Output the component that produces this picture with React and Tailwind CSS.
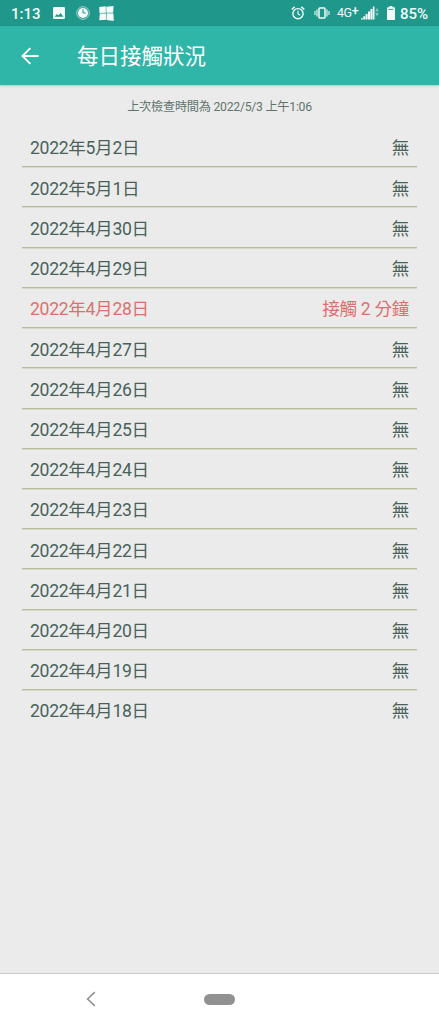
import React from 'react';

const records = [
  { date: '2022年5月2日', status: '無' },
  { date: '2022年5月1日', status: '無' },
  { date: '2022年4月30日', status: '無' },
  { date: '2022年4月29日', status: '無' },
  { date: '2022年4月28日', status: '接觸 2 分鐘', alert: true },
  { date: '2022年4月27日', status: '無' },
  { date: '2022年4月26日', status: '無' },
  { date: '2022年4月25日', status: '無' },
  { date: '2022年4月24日', status: '無' },
  { date: '2022年4月23日', status: '無' },
  { date: '2022年4月22日', status: '無' },
  { date: '2022年4月21日', status: '無' },
  { date: '2022年4月20日', status: '無' },
  { date: '2022年4月19日', status: '無' },
  { date: '2022年4月18日', status: '無' },
];

function StatusBar() {
  return (
    <div className="flex h-[26px] shrink-0 items-center bg-[#1f978a] pr-[11px] pl-[11px] text-[#f4fbfa]">
      <span className="w-[42px] pt-px text-[15px] leading-[26px] font-medium whitespace-nowrap">1:13</span>

      {/* picture */}
      <svg className="h-3 w-3" viewBox="0 0 12 12">
        <path fill="currentColor" fillRule="evenodd" d="M1.2 0h9.6A1.2 1.2 0 0 1 12 1.2v9.6a1.2 1.2 0 0 1-1.2 1.2H1.2A1.2 1.2 0 0 1 0 10.8V1.2A1.2 1.2 0 0 1 1.2 0zM1.6 9.8h8.8L7.7 6 5.3 8.6 3.9 7z" />
      </svg>
      {/* clock */}
      <svg className="ml-[11px] h-3.5 w-3.5" viewBox="0 0 14 14">
        <circle cx="7" cy="7" r="6.3" fill="none" stroke="currentColor" strokeWidth="0.9" opacity="0.7" />
        <circle cx="7" cy="7" r="5.1" fill="currentColor" />
        <path d="M7 3.2V7H9.8" fill="none" stroke="#1f978a" strokeWidth="1" />
      </svg>
      {/* four tiles */}
      <svg className="ml-[9px] h-[15px] w-[15px]" viewBox="0 0 14 14">
        <path fill="currentColor" d="M.2 .9 6.2.2 6.5 6.3.4 6.6zM6.7 .8 13.6.1 13.2 6.3 7 6.2zM.8 7.1 6.4 6.9 6.8 12.9.2 13.3zM7.1 6.8l6.4.2.3 6.9-6.6-.8z" />
      </svg>

      <div className="ml-auto flex items-center">
        {/* alarm */}
        <svg className="h-3.5 w-3.5" viewBox="0 0 14 14" fill="none" stroke="currentColor">
          <circle cx="7" cy="7.7" r="5.1" strokeWidth="1.4" />
          <path d="M.7 3.4 3.7.9M13.3 3.4 10.3.9" strokeWidth="1.4" />
          <path d="M7 4.7v3.2l2.2 1.4" strokeWidth="1.1" />
        </svg>
        {/* vibrate */}
        <svg className="ml-[9px] h-3 w-4" viewBox="0 0 16 12" fill="none" stroke="currentColor">
          <rect x="5" y="1" width="6" height="10" rx="0.8" strokeWidth="1.5" />
          <path d="M3 2.5v7M13 2.5v7" strokeWidth="1.4" opacity="0.8" />
          <path d="M1 4v4M15 4v4" strokeWidth="1.3" opacity="0.8" />
        </svg>
        <span className="ml-[7px] w-[21px] text-[12.5px] leading-[26px] tracking-[-0.3px] whitespace-nowrap">
          4G<span className="relative -top-[2px] font-medium">+</span>
        </span>
        {/* signal strength */}
        <svg className="ml-[3px] h-3.5 w-[18px]" viewBox="0 0 18 14" fill="currentColor">
          <path d="M0 13.5h1.8v-1.3H0zM2.2 13.5h2v-3.2h-2zM4.6 13.5h2V7.9h-2zM7 13.5h2V5.4H7zM9.4 13.5h2V3h-2zM11.8 13.5h1.7V.5h-1.7z" />
          <path d="M14.2 5.6h3.6L16 1.8zM14.2 7h3.6L16 10.8z" opacity="0.45" />
        </svg>
        {/* battery */}
        <svg className="ml-[8px] h-3.5 w-2" viewBox="0 0 8 14">
          <path fill="currentColor" d="M2.5 0h3v1.3H7.3a.7.7 0 0 1 .7.7v11.3a.7.7 0 0 1-.7.7H.7a.7.7 0 0 1-.7-.7V2a.7.7 0 0 1 .7-.7h1.8z" />
          <path d="M1.4 3.4h5.2" stroke="#1f978a" strokeWidth="0.9" />
        </svg>
        <span className="ml-[5px] pt-px text-[15px] leading-[26px] font-medium">85%</span>
      </div>
    </div>
  );
}

function AppBar() {
  return (
    <header className="z-10 flex h-[59px] shrink-0 items-center bg-[#2fb6a9] pl-[21px] text-white shadow-[0_1px_2px_rgba(0,0,0,0.18)]">
      <svg className="h-[18px] w-[18px]" viewBox="0 0 18 18" fill="none" stroke="currentColor" strokeWidth="1.9">
        <path d="M17.5 9H2M9.3 1.2 1.5 9l7.8 7.8" />
      </svg>
      <h1 className="ml-[38px] pt-[2px] text-[21.5px] leading-8 font-normal">每日接觸狀況</h1>
    </header>
  );
}

function RecordRow({ date, status, alert }) {
  return (
    <li
      className={`flex h-[40.23px] items-center justify-between border-b border-[#b9ba98] pt-1 pr-2 pl-2 text-[17.6px] tracking-[-0.32px] shadow-[0_1px_0_rgba(185,186,152,0.4)] last:border-transparent last:shadow-none ${
        alert ? 'text-[#dc7070]' : 'text-[#48625a]'
      }`}
    >
      <span>{date}</span>
      <span>{status}</span>
    </li>
  );
}

function NavigationBar() {
  return (
    <nav className="flex h-[51px] shrink-0 items-center border-t border-[#c9c9c9] bg-white pl-[86px] text-[#919191]">
      <svg className="h-4 w-[10px]" viewBox="0 0 10 16" fill="none" stroke="currentColor" strokeWidth="1.6">
        <path d="M8.8 1.2 1.6 8l7.2 6.8" />
      </svg>
      <div className="ml-[108px] h-[11px] w-[31px] rounded-full bg-[#919191]" />
    </nav>
  );
}

export default function App() {
  return (
    <div className="flex h-screen w-full flex-col overflow-hidden bg-[#ebebeb] font-[Roboto,'Noto_Sans_CJK_TC',sans-serif]">
      <StatusBar />
      <AppBar />
      <main className="flex-1 px-[22px]">
        <p className="pt-3 text-center text-[12.2px] leading-5 tracking-[-0.25px] text-[#5f746d]">上次檢查時間為 2022/5/3 上午1:06</p>
        <ul className="mt-[10px]">
          {records.map((record) => (
            <RecordRow key={record.date} {...record} />
          ))}
        </ul>
      </main>
      <NavigationBar />
    </div>
  );
}
